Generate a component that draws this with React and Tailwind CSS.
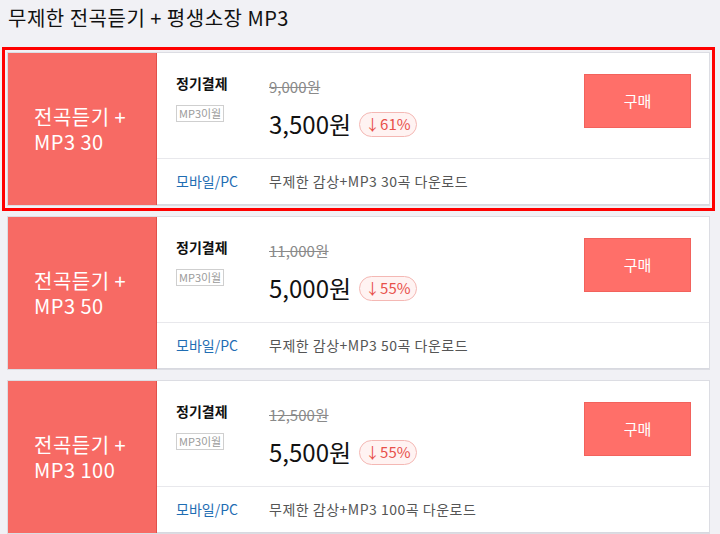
const plans = [
  { count: "30", regular: "9,000원", price: "3,500원", off: "61%", selected: true },
  { count: "50", regular: "11,000원", price: "5,000원", off: "55%", selected: false },
  { count: "100", regular: "12,500원", price: "5,500원", off: "55%", selected: false },
];

const font = { fontFamily: '"Noto Sans CJK KR", "Noto Sans", sans-serif' };

const PlanCard = ({ plan }) => (
  <div
    className={`border-[3px] p-[2px] ${
      plan.selected ? "border-[#ff0000]" : "border-transparent"
    }`}
  >
    <div className="flex h-[154px] border border-[#dcdde3] bg-white">
      <div className="flex w-[149px] shrink-0 flex-col justify-center border-r border-[#e2504a] bg-[#f76a64] pl-[26px] text-[20px] leading-[25px] tracking-[0.5px] text-white">
        <span>전곡듣기 +</span>
        <span>MP3 {plan.count}</span>
      </div>
      <div className="flex flex-1 flex-col">
        <div className="flex h-[106px] items-start border-b border-[#e8e8ec] pl-[19px] pr-[18px]">
          <div className="w-[93px] shrink-0 pt-[20px]">
            <div className="text-[14px] font-bold leading-[20px] text-[#111]">정기결제</div>
            <div className="mt-[12px] inline-block border border-[#cfcfcf] px-[2px] text-[11px] leading-[15px] text-[#9a9a9a]">
              MP3이월
            </div>
          </div>
          <div className="flex-1 pt-[24px]">
            <div className="text-[15px] leading-[20px] text-[#8a8a8a] line-through">{plan.regular}</div>
            <div className="mt-[12px] flex items-center gap-[8px]">
              <span className="text-[24px] leading-[30px] text-[#111]">{plan.price}</span>
              <span className="flex h-[25px] items-center rounded-full border border-[#f4b8b4] bg-[#fff3f2] px-[5px] text-[15px] text-[#e8504a]">
                ↓{plan.off}
              </span>
            </div>
          </div>
          <button className="mt-[21px] h-[54px] w-[107px] border border-[#f2625c] bg-[#ff6f69] text-[15px] text-white">
            구매
          </button>
        </div>
        <div className="flex flex-1 items-center border-b border-[#d8d9e0] pl-[19px] text-[14px]">
          <span className="w-[93px] text-[#1f6db3]">모바일/PC</span>
          <span className="tracking-[0.5px] text-[#555]">무제한 감상+MP3 {plan.count}곡 다운로드</span>
        </div>
      </div>
    </div>
  </div>
);

export default function App() {
  return (
    <div className="h-[534px] w-[720px] overflow-hidden bg-[#f1f1f5] pl-[2px] pr-[5px]" style={font}>
      <h1 className="h-[47px] pl-[6px] pt-[4px] text-[20px] leading-[28px] tracking-[0.5px] text-[#111]">
        무제한 전곡듣기 + 평생소장 MP3
      </h1>
      {plans.map((plan) => (
        <PlanCard key={plan.count} plan={plan} />
      ))}
    </div>
  );
}
